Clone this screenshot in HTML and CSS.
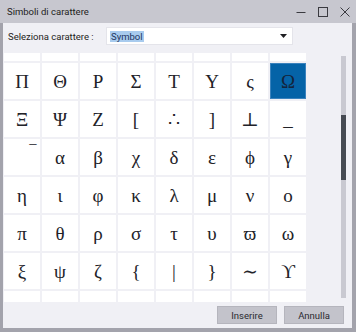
FILE: index.html
```html
<!DOCTYPE html>
<html lang="it">
<head>
<meta charset="utf-8">
<title>Simboli di carattere</title>
<link rel="stylesheet" href="styles.css">
</head>
<body>
<div class="window">
  <div class="titlebar">
    <span class="title">Simboli di carattere</span>
    <div class="controls">
      <span class="ctl"><svg width="10" height="10" viewBox="0 0 10 10"><path d="M0.5 5.5H9.5" stroke="#3a3a40" stroke-width="1"/></svg></span>
      <span class="ctl"><svg width="10" height="10" viewBox="0 0 10 10"><rect x="0.5" y="0.5" width="9" height="9" fill="none" stroke="#3a3a40" stroke-width="1"/></svg></span>
      <span class="ctl"><svg width="10" height="10" viewBox="0 0 10 10"><path d="M0.5 0.5L9.5 9.5M9.5 0.5L0.5 9.5" stroke="#3a3a40" stroke-width="1"/></svg></span>
    </div>
  </div>
  <div class="content">
    <div class="select-row">
      <span class="label">Seleziona carattere :</span>
      <div class="dropdown">
        <span class="sel">Symbol</span>
        <svg class="arrow" width="7" height="4" viewBox="0 0 7 4"><polygon points="0,0 7,0 3.5,4" fill="#1e1e22"/></svg>
      </div>
    </div>
    <div class="main">
      <div class="viewport">
        <div class="grid">
          <span class="cell"></span><span class="cell"></span><span class="cell"></span><span class="cell"></span><span class="cell"></span><span class="cell"></span><span class="cell"></span><span class="cell"></span>
          <span class="cell">Π</span><span class="cell">Θ</span><span class="cell">Ρ</span><span class="cell">Σ</span><span class="cell">Τ</span><span class="cell">Υ</span><span class="cell">ς</span><span class="cell selected">Ω</span>
          <span class="cell">Ξ</span><span class="cell">Ψ</span><span class="cell">Ζ</span><span class="cell">[</span><span class="cell">∴</span><span class="cell">]</span><span class="cell">⊥</span><span class="cell">_</span>
          <span class="cell ov">‾</span><span class="cell">α</span><span class="cell">β</span><span class="cell">χ</span><span class="cell">δ</span><span class="cell">ε</span><span class="cell">ϕ</span><span class="cell">γ</span>
          <span class="cell">η</span><span class="cell">ι</span><span class="cell">φ</span><span class="cell">κ</span><span class="cell">λ</span><span class="cell">μ</span><span class="cell">ν</span><span class="cell">ο</span>
          <span class="cell">π</span><span class="cell">θ</span><span class="cell">ρ</span><span class="cell">σ</span><span class="cell">τ</span><span class="cell">υ</span><span class="cell">ϖ</span><span class="cell">ω</span>
          <span class="cell">ξ</span><span class="cell">ψ</span><span class="cell">ζ</span><span class="cell">{</span><span class="cell">|</span><span class="cell">}</span><span class="cell">∼</span><span class="cell">ϒ</span>
          <span class="cell"></span><span class="cell"></span><span class="cell"></span><span class="cell"></span><span class="cell"></span><span class="cell"></span><span class="cell"></span><span class="cell"></span>
        </div>
      </div>
      <div class="scrollbar"><div class="thumb"></div></div>
    </div>
    <div class="footer">
      <button class="btn">Inserire</button>
      <button class="btn">Annulla</button>
    </div>
  </div>
</div>
</body>
</html>
```
FILE: styles.css
```css
html, body {
  margin: 0;
  padding: 0;
}
body {
  width: 356px;
  height: 332px;
  overflow: hidden;
  font-family: Roboto, "Open Sans", sans-serif;
  font-size: 9px;
  color: #1e1e22;
}
.window {
  width: 356px;
  height: 332px;
  display: flex;
  flex-direction: column;
  background: #c7c7cf;
}
.titlebar {
  height: 23px;
  display: flex;
  align-items: center;
  padding-left: 7px;
  box-sizing: border-box;
  flex-shrink: 0;
}
.title {
  font-size: 9.5px;
  color: #1e1e22;
}
.controls {
  margin-left: auto;
  display: flex;
  height: 23px;
}
.ctl {
  width: 22px;
  display: flex;
  align-items: center;
  justify-content: center;
}
.content {
  flex: 1;
  background: #f0f0f5;
  border-style: solid;
  border-color: #a3a3ac;
  border-width: 0 4px 4px 3px;
  display: flex;
  flex-direction: column;
}
.select-row {
  margin-top: 4px;
  height: 18px;
  display: flex;
  align-items: center;
}
.label {
  width: 103px;
  padding-left: 5px;
  box-sizing: border-box;
  font-size: 9.5px;
}
.dropdown {
  width: 187px;
  height: 18px;
  box-sizing: border-box;
  background: #ffffff;
  border: 1px solid #e4e4ea;
  display: flex;
  align-items: center;
  padding-left: 3px;
  padding-right: 5px;
}
.sel {
  background: #a8cbee;
  color: #1d3560;
  font-size: 9.5px;
  line-height: 11px;
  padding: 0 1px;
}
.arrow {
  margin-left: auto;
}
.main {
  margin-top: 8px;
  height: 249px;
  display: flex;
}
.viewport {
  margin-left: 1px;
  width: 302px;
  height: 249px;
  overflow: hidden;
}
.grid {
  margin-top: -28px;
  display: grid;
  grid-template-columns: repeat(8, 36px);
  grid-auto-rows: 36px;
  gap: 2px;
}
.cell {
  background: #ffffff;
  display: flex;
  align-items: center;
  justify-content: center;
  font-family: "Liberation Serif", "DejaVu Serif", serif;
  font-size: 19px;
  line-height: 1;
  color: #222228;
}
.cell.ov {
  justify-content: flex-end;
  align-items: flex-start;
  padding: 4px 4px 0 0;
  box-sizing: border-box;
}
.cell.selected {
  background: #0563a7;
  color: #14243c;
  box-shadow: inset 0 0 0 1px #3a82bd;
}
.scrollbar {
  margin-left: 35px;
  margin-top: 3px;
  width: 5px;
  height: 242px;
  background: #c9c9d1;
}
.thumb {
  margin-top: 59px;
  height: 65px;
  background: #464a52;
}
.footer {
  margin-top: 4px;
  display: flex;
  justify-content: flex-end;
  gap: 7px;
  padding-right: 8px;
}
.btn {
  width: 60px;
  height: 18px;
  margin: 0;
  padding: 0;
  background: #c3c3cb;
  border: 1px solid #b5b5bd;
  font-family: Roboto, "Open Sans", sans-serif;
  font-size: 9.5px;
  color: #2a2a30;
}
```
